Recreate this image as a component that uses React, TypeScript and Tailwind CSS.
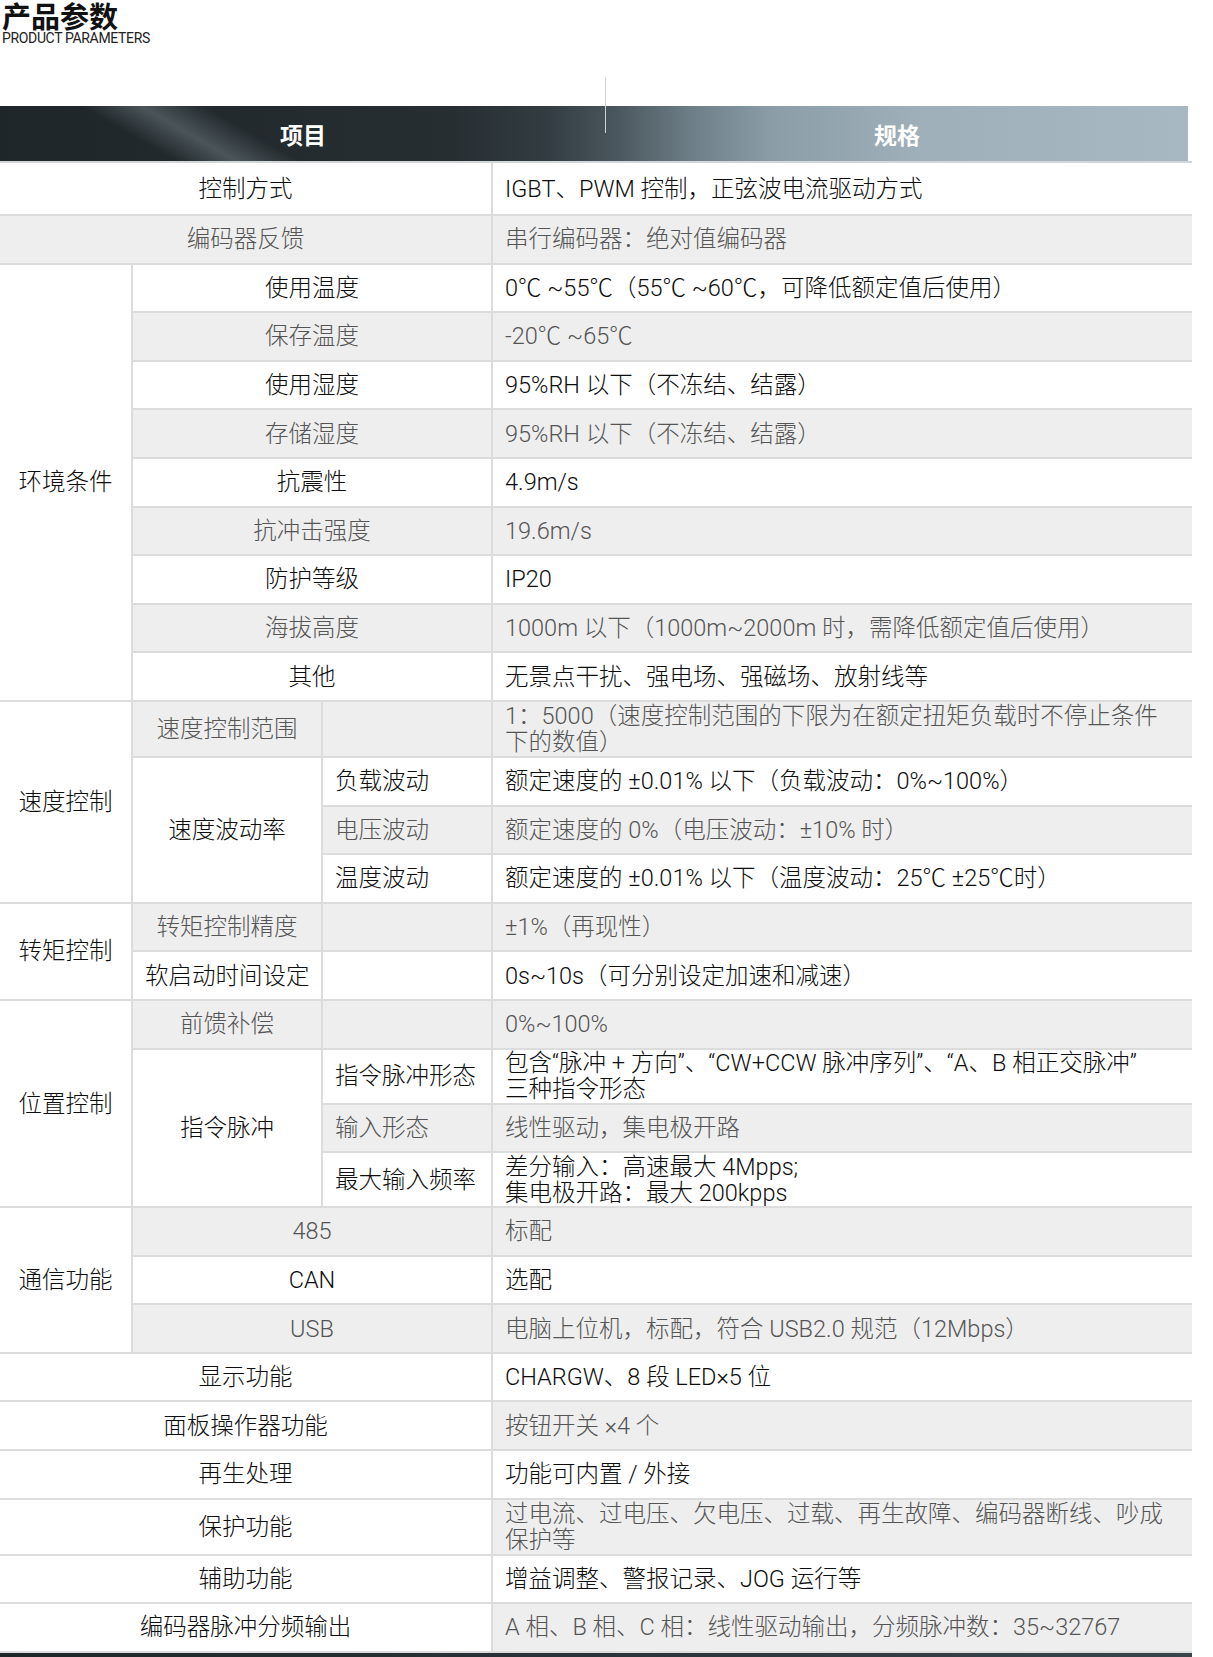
import type { ReactNode } from 'react';
import clsx from 'clsx';

interface CellProps {
  children?: ReactNode;
  gray?: boolean;
  left?: boolean;
  last?: boolean;
  colSpan?: number;
  rowSpan?: number;
}

// one table cell: 2px light rules on the bottom and right, grey or white fill
function Cell({ children, gray, left, last, colSpan, rowSpan }: CellProps) {
  return (
    <td
      colSpan={colSpan}
      rowSpan={rowSpan}
      className={clsx(
        'border-b-2 border-[#dcdcdc] px-3 align-middle text-[23.5px] leading-[26px] font-light whitespace-nowrap',
        !last && 'border-r-2',
        left ? 'text-left' : 'text-center',
        gray ? 'bg-[#eeeeee] text-[#555555]' : 'bg-white text-[#0d0d0d]'
      )}
    >
      {children}
    </td>
  );
}

// the value column, always last and left aligned
function Val({ children, gray }: { children: ReactNode; gray?: boolean }) {
  return (
    <Cell gray={gray} left last>
      {children}
    </Cell>
  );
}

export default function App() {
  return (
    <div className="relative w-[1213px] bg-white font-['Roboto','Noto_Sans_CJK_SC',sans-serif] text-[#222]">
      {/* Title */}
      <div className="pl-[2px]">
        <h1 className="h-[31px] font-['Noto_Sans_CJK_SC',sans-serif] text-[29px] leading-[31px] font-bold text-[#111]">
          产品参数
        </h1>
        <p className="font-['Roboto',sans-serif] text-[14px] leading-[14px] tracking-tight text-[#222]">
          PRODUCT PARAMETERS
        </p>
      </div>

      {/* thin rule hanging over the header */}
      <div className="absolute left-[605px] top-[77px] h-[56px] w-px bg-[#cfd2d4]" />

      {/* Header band */}
      <div className="mt-[61px] flex h-[55px] w-[1188px] items-center bg-[linear-gradient(30deg,transparent_88px,rgba(130,145,152,0.42)_118px,transparent_150px),linear-gradient(90deg,#1f2629_0%,#262e32_38%,#323c41_46%,#4b575e_52%,#6c7d86_58%,#8b9da7_65%,#9eafb9_77%,#a7b8c2_100%)] pt-[1px] font-['Noto_Sans_CJK_SC',sans-serif] text-[23px] font-bold text-white">
        <div className="w-[606px] text-center">项目</div>
        <div className="flex-1 text-center">规格</div>
      </div>

      <table className="w-[1192px] table-fixed border-separate border-spacing-0 border-t-2 border-[#d3d6d8]">
        <colgroup>
          <col className="w-[133px]" />
          <col className="w-[190px]" />
          <col className="w-[170px]" />
          <col className="w-[699px]" />
        </colgroup>
        <tbody>
          <tr className="h-[53px]">
            <Cell colSpan={3}>控制方式</Cell>
            <Val>IGBT、PWM 控制，正弦波电流驱动方式</Val>
          </tr>
          <tr className="h-[48.6px]">
            <Cell colSpan={3} gray>编码器反馈</Cell>
            <Val gray>串行编码器：绝对值编码器</Val>
          </tr>

          {/* 环境条件 */}
          <tr className="h-[48.6px]">
            <Cell rowSpan={9}>环境条件</Cell>
            <Cell colSpan={2}>使用温度</Cell>
            <Val>0℃ ~55℃（55℃ ~60℃，可降低额定值后使用）</Val>
          </tr>
          <tr className="h-[48.6px]">
            <Cell colSpan={2} gray>保存温度</Cell>
            <Val gray>-20℃ ~65℃</Val>
          </tr>
          <tr className="h-[48.6px]">
            <Cell colSpan={2}>使用湿度</Cell>
            <Val>95%RH 以下（不冻结、结露）</Val>
          </tr>
          <tr className="h-[48.6px]">
            <Cell colSpan={2} gray>存储湿度</Cell>
            <Val gray>95%RH 以下（不冻结、结露）</Val>
          </tr>
          <tr className="h-[48.6px]">
            <Cell colSpan={2}>抗震性</Cell>
            <Val>4.9m/s</Val>
          </tr>
          <tr className="h-[48.6px]">
            <Cell colSpan={2} gray>抗冲击强度</Cell>
            <Val gray>19.6m/s</Val>
          </tr>
          <tr className="h-[48.6px]">
            <Cell colSpan={2}>防护等级</Cell>
            <Val>IP20</Val>
          </tr>
          <tr className="h-[48.6px]">
            <Cell colSpan={2} gray>海拔高度</Cell>
            <Val gray>1000m 以下（1000m~2000m 时，需降低额定值后使用）</Val>
          </tr>
          <tr className="h-[48.6px]">
            <Cell colSpan={2}>其他</Cell>
            <Val>无景点干扰、强电场、强磁场、放射线等</Val>
          </tr>

          {/* 速度控制 */}
          <tr className="h-[56px]">
            <Cell rowSpan={4}>速度控制</Cell>
            <Cell gray>速度控制范围</Cell>
            <Cell gray />
            <Val gray>
              1：5000（速度控制范围的下限为在额定扭矩负载时不停止条件
              <br />
              下的数值）
            </Val>
          </tr>
          <tr className="h-[48.6px]">
            <Cell rowSpan={3}>速度波动率</Cell>
            <Cell left>负载波动</Cell>
            <Val>额定速度的 ±0.01% 以下（负载波动：0%~100%）</Val>
          </tr>
          <tr className="h-[48.6px]">
            <Cell left gray>电压波动</Cell>
            <Val gray>额定速度的 0%（电压波动：±10% 时）</Val>
          </tr>
          <tr className="h-[48.6px]">
            <Cell left>温度波动</Cell>
            <Val>额定速度的 ±0.01% 以下（温度波动：25℃ ±25℃时）</Val>
          </tr>

          {/* 转矩控制 */}
          <tr className="h-[48.6px]">
            <Cell rowSpan={2}>转矩控制</Cell>
            <Cell gray>转矩控制精度</Cell>
            <Cell gray />
            <Val gray>±1%（再现性）</Val>
          </tr>
          <tr className="h-[48.6px]">
            <Cell>软启动时间设定</Cell>
            <Cell />
            <Val>0s~10s（可分别设定加速和减速）</Val>
          </tr>

          {/* 位置控制 */}
          <tr className="h-[48.6px]">
            <Cell rowSpan={4}>位置控制</Cell>
            <Cell gray>前馈补偿</Cell>
            <Cell gray />
            <Val gray>0%~100%</Val>
          </tr>
          <tr className="h-[55px]">
            <Cell rowSpan={3}>指令脉冲</Cell>
            <Cell left>指令脉冲形态</Cell>
            <Val>
              包含“脉冲 + 方向”、“CW+CCW 脉冲序列”、“A、B 相正交脉冲”
              <br />
              三种指令形态
            </Val>
          </tr>
          <tr className="h-[48.6px]">
            <Cell left gray>输入形态</Cell>
            <Val gray>线性驱动，集电极开路</Val>
          </tr>
          <tr className="h-[55px]">
            <Cell left>最大输入频率</Cell>
            <Val>
              差分输入：高速最大 4Mpps;
              <br />
              集电极开路：最大 200kpps
            </Val>
          </tr>

          {/* 通信功能 */}
          <tr className="h-[48.6px]">
            <Cell rowSpan={3}>通信功能</Cell>
            <Cell colSpan={2} gray>485</Cell>
            <Val gray>标配</Val>
          </tr>
          <tr className="h-[48.6px]">
            <Cell colSpan={2}>CAN</Cell>
            <Val>选配</Val>
          </tr>
          <tr className="h-[48.6px]">
            <Cell colSpan={2} gray>USB</Cell>
            <Val gray>电脑上位机，标配，符合 USB2.0 规范（12Mbps）</Val>
          </tr>

          <tr className="h-[48.6px]">
            <Cell colSpan={3}>显示功能</Cell>
            <Val>CHARGW、8 段 LED×5 位</Val>
          </tr>
          <tr className="h-[48.6px]">
            <Cell colSpan={3}>面板操作器功能</Cell>
            <Val gray>按钮开关 ×4 个</Val>
          </tr>
          <tr className="h-[48.6px]">
            <Cell colSpan={3}>再生处理</Cell>
            <Val>功能可内置 / 外接</Val>
          </tr>
          <tr className="h-[56px]">
            <Cell colSpan={3}>保护功能</Cell>
            <Val gray>
              过电流、过电压、欠电压、过载、再生故障、编码器断线、吵成
              <br />
              保护等
            </Val>
          </tr>
          <tr className="h-[48.5px]">
            <Cell colSpan={3}>辅助功能</Cell>
            <Val>增益调整、警报记录、JOG 运行等</Val>
          </tr>
          <tr className="h-[48.5px]">
            <Cell colSpan={3}>编码器脉冲分频输出</Cell>
            <Val gray>A 相、B 相、C 相：线性驱动输出，分频脉冲数：35~32767</Val>
          </tr>
        </tbody>
      </table>

      {/* start of the next dark band */}
      <div className="h-[10px] w-[1192px] bg-[linear-gradient(90deg,#1f2629_0%,#2a3337_50%,#3a454b_100%)]" />
    </div>
  );
}
